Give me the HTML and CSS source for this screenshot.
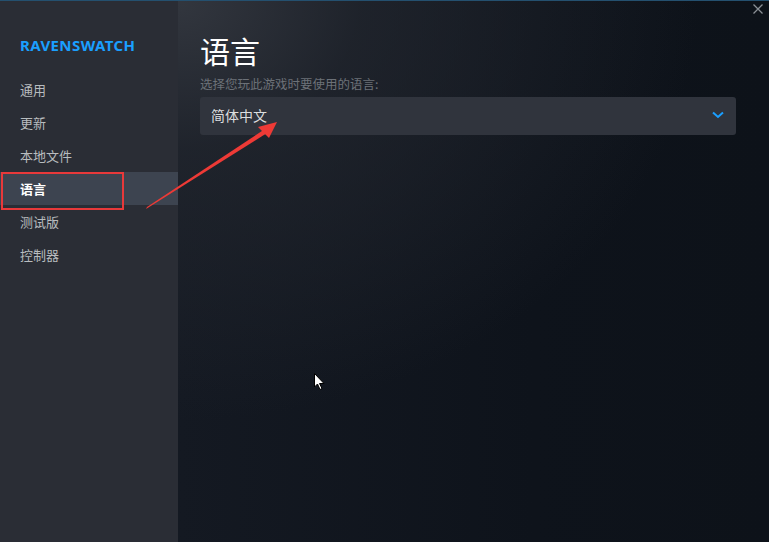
FILE: index.html
```html
<!DOCTYPE html>
<html lang="zh-CN">
<head>
<meta charset="utf-8">
<title>Ravenswatch 属性</title>
<link rel="stylesheet" href="styles.css">
</head>
<body>
<div class="window">
  <aside class="sidebar">
    <div class="game-title">RAVENSWATCH</div>
    <nav class="nav">
      <div class="nav-item">通用</div>
      <div class="nav-item">更新</div>
      <div class="nav-item">本地文件</div>
      <div class="nav-item active">语言</div>
      <div class="nav-item">测试版</div>
      <div class="nav-item">控制器</div>
    </nav>
  </aside>
  <main class="main">
    <h1 class="heading">语言</h1>
    <p class="subtitle">选择您玩此游戏时要使用的语言:</p>
    <div class="select">
      <span class="select-value">简体中文</span>
      <svg class="chevron" width="12" height="8" viewBox="0 0 12 8"><path d="M1 1.5 L6 6 L11 1.5" fill="none" stroke="#1a9fff" stroke-width="2"/></svg>
    </div>
  </main>
  <svg class="close" width="10" height="10" viewBox="0 0 10 10"><path d="M0.5 0.5 L9.5 9.5 M9.5 0.5 L0.5 9.5" stroke="#8b9096" stroke-width="1.3"/></svg>
  <div class="highlight-box"></div>
  <svg class="annotation" width="769" height="542" viewBox="0 0 769 542">
    <polygon points="146,209 147,207 265,129 267,133" fill="#ee3a36"/>
    <polygon points="277,122 258,127 269,138" fill="#ee3a36"/>
  </svg>
  <svg class="cursor" width="12" height="18" viewBox="0 0 12 18"><path d="M0.5 0.5 L0.5 14 L3.5 11 L6 16.5 L8 15.5 L5.5 10.5 L10 10.5 Z" fill="#ffffff" stroke="#000000" stroke-width="1"/></svg>
</div>
</body>
</html>
```
FILE: styles.css
```css
* { box-sizing: border-box; }
html, body { margin: 0; padding: 0; }
body {
  width: 769px;
  height: 542px;
  overflow: hidden;
  background: #0e131b;
  font-family: "Noto Sans", "Noto Sans CJK SC", sans-serif;
}
.window {
  position: relative;
  display: flex;
  width: 769px;
  height: 542px;
  border-top: 1px solid #24506f;
}
.sidebar {
  width: 178px;
  flex: none;
  background: #2a2d35;
  padding-top: 34px;
}
.game-title {
  padding-left: 20px;
  font-family: "Noto Sans", sans-serif;
  font-weight: 700;
  font-size: 15px;
  line-height: 20px;
  color: #1a9fff;
  letter-spacing: 0.4px;
  margin-bottom: 18px;
}
.nav { display: flex; flex-direction: column; }
.nav-item {
  height: 33px;
  line-height: 33px;
  padding-left: 20px;
  font-family: "Noto Sans CJK SC", sans-serif;
  font-size: 13px;
  color: #b8bcbf;
}
.nav-item.active {
  background: #3d4450;
  color: #ffffff;
  font-weight: 700;
}
.main {
  flex: 1;
  padding: 28px 33px 0 22px;
  background:
    radial-gradient(ellipse 520px 420px at 0 0, rgba(52,56,64,0.95) 0%, rgba(36,40,48,0.7) 35%, rgba(14,19,27,0) 100%),
    linear-gradient(90deg, #141922 0%, #0e131b 60%, #0d1219 100%);
}
.heading {
  margin: 0;
  font-family: "Noto Sans CJK SC", sans-serif;
  font-weight: 400;
  font-size: 30px;
  line-height: 42px;
  color: #ffffff;
}
.subtitle {
  margin: 4px 0 0 0;
  font-family: "Noto Sans CJK SC", sans-serif;
  font-size: 12.5px;
  line-height: 18px;
  color: #6c7178;
}
.select {
  margin-top: 4px;
  height: 38px;
  background: #30343d;
  border-radius: 3px;
  display: flex;
  align-items: center;
  justify-content: space-between;
  padding: 0 12px 0 11px;
}
.select-value {
  font-family: "Noto Sans CJK SC", sans-serif;
  font-size: 14px;
  color: #dcdedf;
  padding-bottom: 3px;
}
.chevron { margin-bottom: 2px; }
.close {
  position: absolute;
  top: 3px;
  left: 753px;
}
.highlight-box {
  position: absolute;
  left: 1px;
  top: 171px;
  width: 123px;
  height: 38px;
  border: 2px solid #e8393a;
}
.annotation {
  position: absolute;
  left: 0;
  top: -1px;
  pointer-events: none;
}
.cursor {
  position: absolute;
  left: 314px;
  top: 372px;
}
```
